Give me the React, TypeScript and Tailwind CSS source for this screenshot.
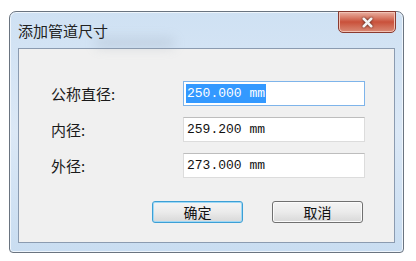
import { X } from "lucide-react";

const cjk = { fontFamily: '"Noto Sans CJK SC", "Noto Sans", sans-serif' };
const mono = { fontFamily: '"Liberation Mono", "DejaVu Sans Mono", monospace' };

const Field = ({ label, value, selected }: { label: string; value: string; selected?: boolean }) => (
  <div className="flex h-[25px] items-center">
    <span className="w-[132px] text-[15px] leading-none text-[#1a1a1a]" style={cjk}>
      {label}
    </span>
    <div
      className={`flex h-[25px] w-[182px] items-center border bg-white pl-[2px] text-[13px] text-[#111] ${
        selected ? "border-[#7eb4ea]" : "border-[#dcdcdc] border-t-[#bdbdbd]"
      }`}
      style={mono}
    >
      {selected ? <span className="bg-[#3399ff] px-[1px] leading-[19px] text-white">{value}</span> : <span className="px-[1px]">{value}</span>}
    </div>
  </div>
);

const Btn = ({ text, focused }: { text: string; focused?: boolean }) => (
  <button
    className={`flex h-[22px] w-[91px] items-center justify-center rounded-[3px] border bg-gradient-to-b from-[#f4f4f4] via-[#ebebeb] to-[#d8d8d8] text-[14px] text-[#111] ${
      focused ? "border-[#3c9fd5] shadow-[inset_0_0_0_1px_#9fd8f5]" : "border-[#707070] shadow-[inset_0_0_0_1px_#fbfbfb]"
    }`}
    style={cjk}
  >
    {text}
  </button>
);

export default function App() {
  return (
    <div className="h-[261px] w-[416px] bg-white pl-[9px] pt-[11px]">
      <div className="relative flex h-[242px] w-[395px] flex-col rounded-t-[7px] rounded-b-[4px] border border-[#6a7480] bg-gradient-to-b from-[#cfe1f3] via-[#dbe8f6] to-[#c9ddf1] px-[8px] pb-[9px] shadow-[inset_0_0_0_1px_#eef5fc]">
        <div className="pointer-events-none absolute left-[85px] top-[26px] h-[10px] w-[80px] rounded-full bg-[#8a98a8] opacity-25 blur-[6px]" />
        <div className="relative flex h-[36px] items-end justify-between">
          <span className="pb-[10px] text-[15px] leading-none text-[#222]" style={cjk}>
            添加管道尺寸
          </span>
          <div className="absolute right-[-1px] top-[-1px] flex h-[22px] w-[58px] items-center justify-center rounded-b-[5px] border border-[#8a3a30] bg-gradient-to-b from-[#e8b0a2] via-[#c9503a] to-[#d98a76] shadow-[inset_0_0_0_1px_#f2c2b4]">
            <X size={15} strokeWidth={4} className="text-[#f4f4f4] drop-shadow-[0_0_1px_#3a1a14]" />
          </div>
        </div>
        <div className="flex flex-1 flex-col border border-[#8b9bb0] bg-[#f0f0f0] pl-[32px] pt-[32px]">
          <div className="flex flex-col gap-[11px]">
            <Field label="公称直径:" value="250.000 mm" selected />
            <Field label="内径:" value="259.200 mm" />
            <Field label="外径:" value="273.000 mm" />
          </div>
          <div className="mt-[23px] flex gap-[29px] pl-[101px]">
            <Btn text="确定" focused />
            <Btn text="取消" />
          </div>
        </div>
      </div>
    </div>
  );
}
